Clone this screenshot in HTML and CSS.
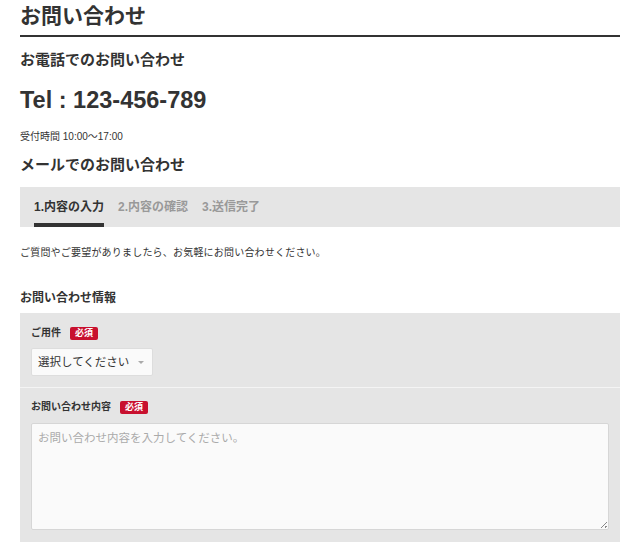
FILE: index.html
```html
<!DOCTYPE html>
<html lang="ja">
<head>
<meta charset="utf-8">
<title>お問い合わせ</title>
<link rel="stylesheet" href="styles.css">
</head>
<body>
<main class="page">
  <h1 class="page-title">お問い合わせ</h1>
  <h2 class="section-title tel-title">お電話でのお問い合わせ</h2>
  <p class="tel">Tel : 123-456-789</p>
  <p class="hours">受付時間 10:00〜17:00</p>
  <h2 class="section-title mail-title">メールでのお問い合わせ</h2>
  <nav class="steps">
    <span class="step active">1.内容の入力</span>
    <span class="step">2.内容の確認</span>
    <span class="step">3.送信完了</span>
  </nav>
  <p class="intro">ご質問やご要望がありましたら、お気軽にお問い合わせください。</p>
  <h3 class="form-title">お問い合わせ情報</h3>
  <div class="panel">
    <div class="field field-first">
      <div class="label">ご用件<span class="req">必須</span></div>
      <div class="select">選択してください<span class="arrow"></span></div>
    </div>
    <div class="field field-second">
      <div class="label">お問い合わせ内容<span class="req">必須</span></div>
      <div class="textarea"><span class="placeholder">お問い合わせ内容を入力してください。</span><span class="grip"></span></div>
    </div>
  </div>
</main>
</body>
</html>
```

FILE: styles.css
```css
* { box-sizing: border-box; }
body {
  margin: 0;
  background: #fff;
  color: #333;
  font-family: "Liberation Sans", Arial, "Noto Sans CJK JP", sans-serif;
}
.page { padding: 0 20px; }
.page-title {
  margin: 0;
  font-size: 21px;
  font-weight: bold;
  line-height: 30px;
  height: 37px;
  padding-top: 1px;
  border-bottom: 2px solid #333;
}
.section-title {
  margin: 0;
  font-size: 15px;
  font-weight: bold;
  line-height: 24px;
}
.tel-title { margin-top: 11px; }
.tel {
  margin: 13px 0 0;
  font-size: 23.5px;
  font-weight: bold;
  line-height: 30px;
}
.hours {
  margin: 14px 0 0;
  font-size: 10px;
  line-height: 16px;
}
.mail-title { margin-top: 8px; }
.steps {
  margin-top: 10px;
  height: 40px;
  background: #e5e5e5;
  display: flex;
  gap: 14px;
  padding-left: 14px;
}
.step {
  font-size: 12px;
  font-weight: bold;
  color: #999;
  line-height: 40px;
  height: 40px;
}
.step.active {
  color: #333;
  border-bottom: 4px solid #333;
}
.intro {
  margin: 18px 0 0;
  font-size: 10px;
  line-height: 16px;
  letter-spacing: 0.2px;
  color: #333;
}
.form-title {
  margin: 28px 0 0;
  font-size: 12px;
  font-weight: bold;
  line-height: 18px;
}
.panel {
  margin-top: 6px;
  background: #e5e5e5;
}
.field { padding: 0 11px; }
.field-first {
  padding-top: 12px;
  padding-bottom: 11px;
  border-bottom: 1px solid #f4f4f4;
}
.field-second {
  padding-top: 11px;
  padding-bottom: 12px;
}
.label {
  font-size: 10px;
  font-weight: bold;
  line-height: 16px;
  display: flex;
  align-items: center;
  gap: 9px;
}
.req {
  background: #c8102e;
  color: #fff;
  font-size: 9px;
  font-weight: bold;
  line-height: 13px;
  height: 13px;
  padding: 0 5px;
  border-radius: 2px;
}
.select {
  margin-top: 7px;
  width: 122px;
  height: 28px;
  background: #fafafa;
  border: 1px solid #ddd;
  border-radius: 2px;
  font-size: 11.5px;
  line-height: 26px;
  padding-left: 6px;
  color: #333;
  position: relative;
}
.arrow {
  position: absolute;
  right: 8px;
  top: 12px;
  border-left: 3px solid transparent;
  border-right: 3px solid transparent;
  border-top: 3px solid #aaa;
}
.textarea {
  margin-top: 8px;
  height: 107px;
  background: #fafafa;
  border: 1px solid #d6d6d6;
  border-radius: 2px;
  padding: 4px 6px;
  position: relative;
}
.placeholder {
  font-size: 11.5px;
  line-height: 16px;
  color: #aaa;
}
.grip {
  position: absolute;
  right: 1px;
  bottom: 1px;
  width: 6px;
  height: 6px;
  background: linear-gradient(135deg, transparent 45%, #888 45%, #888 55%, transparent 55%, transparent 75%, #888 75%, #888 85%, transparent 85%);
}
```
